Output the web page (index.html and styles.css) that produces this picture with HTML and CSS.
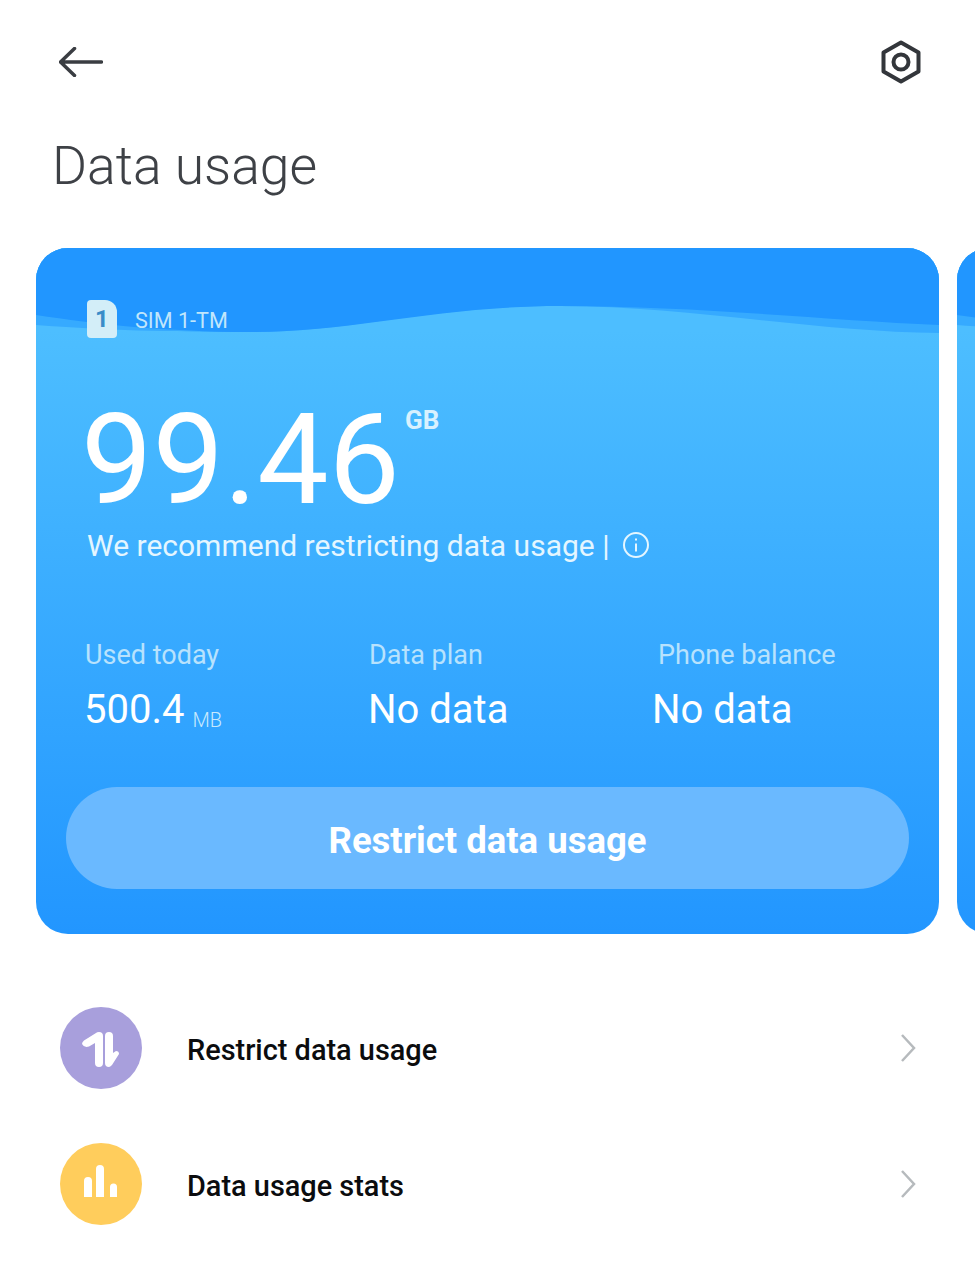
FILE: index.html
```html
<!DOCTYPE html>
<html lang="en">
<head>
    <meta charset="UTF-8">
    <meta name="viewport" content="width=device-width, initial-scale=1.0">
    <title>Data usage</title>
    <link rel="stylesheet" href="styles.css">
</head>
<body>
    <header class="top-bar">
        <svg class="back-icon" width="44" height="30" viewBox="0 0 44 30">
            <path d="M42.500 15H2M15.500 1.500 1.500 15l14 13.500"/>
        </svg>
        <svg class="settings-icon" width="40" height="44" viewBox="0 0 40 44">
            <path d="M20 2.500 37.500 12.500V31.500L20 41.500 2.500 31.500V12.500Z"/>
            <circle cx="20" cy="22" r="7.500"/>
        </svg>
    </header>

    <h1 class="page-title">Data usage</h1>

    <div class="carousel">
        <section class="card">
            <svg class="card-wave" viewBox="0 0 903 100" preserveAspectRatio="none">
                <path class="wave-band" d="M0 0H903V85C780 84 650 58 524 58 390 58 320 84 214 84 130 84 70 82 0 77Z"/>
                <path class="wave-top" d="M0 0H903V77C790 72 660 58 524 58 400 58 320 84 214 84 130 84 60 76 0 67Z"/>
            </svg>

            <div class="card-body">
                <div class="sim-row">
                    <div class="sim-icon">1</div>
                    <span class="sim-name">SIM 1-TM</span>
                </div>

                <div class="amount-row">
                    <span class="amount">99.46</span>
                    <span class="amount-unit">GB</span>
                </div>

                <div class="advice-row">
                    <span>We recommend restricting data usage |</span>
                    <svg class="info-icon" width="28" height="28" viewBox="0 0 28 28">
                        <circle cx="14" cy="14" r="12"/>
                        <path d="M14 12.500V20.500M14 7.500V9.500"/>
                    </svg>
                </div>

                <div class="stats">
                    <div class="stat">
                        <div class="stat-label">Used today</div>
                        <div class="stat-value">500.4 <small>MB</small></div>
                    </div>
                    <div class="stat">
                        <div class="stat-label">Data plan</div>
                        <div class="stat-value">No data</div>
                    </div>
                    <div class="stat">
                        <div class="stat-label stat-label-shift">Phone balance</div>
                        <div class="stat-value">No data</div>
                    </div>
                </div>

                <button class="restrict-button">Restrict data usage</button>
            </div>
        </section>
        <section class="card">
            <svg class="card-wave" viewBox="0 0 903 100" preserveAspectRatio="none">
                <path class="wave-band" d="M0 0H903V85C780 84 650 58 524 58 390 58 320 84 214 84 130 84 70 82 0 77Z"/>
                <path class="wave-top" d="M0 0H903V77C790 72 660 58 524 58 400 58 320 84 214 84 130 84 60 76 0 67Z"/>
            </svg>
        </section>
    </div>

    <ul class="menu">
        <li class="menu-item">
            <div class="menu-icon menu-icon-purple">
                <svg width="82" height="82" viewBox="0 0 82 82">
                    <path class="glyph" d="M39 25Q43 25 43 29V56Q43 60 39 60 35 60 35 56V36L29 39.500Q24 41 22 37 22 35 24 33.500L36 26Q37 25 39 25Z"/>
                    <path class="glyph" d="M49 25Q53 25 53 29V46L56 44Q59 44 59 47L52 58Q50 60 49 60 45 60 45 56V29Q45 25 49 25Z"/>
                </svg>
            </div>
            <span class="menu-label">Restrict data usage</span>
            <svg class="chevron" width="18" height="30" viewBox="0 0 18 30">
                <path d="M4 2 16 15 4 28"/>
            </svg>
        </li>
        <li class="menu-item">
            <div class="menu-icon menu-icon-yellow">
                <svg width="82" height="82" viewBox="0 0 82 82">
                    <path class="glyph" d="M24 54V38a4 4 0 0 1 8 0V54ZM36 54V26a4 4 0 0 1 8 0V54ZM50 54V44a3.500 3.500 0 0 1 7 0V54Z"/>
                </svg>
            </div>
            <span class="menu-label">Data usage stats</span>
            <svg class="chevron" width="18" height="30" viewBox="0 0 18 30">
                <path d="M4 2 16 15 4 28"/>
            </svg>
        </li>
    </ul>
</body>
</html>
```

FILE: styles.css
```css
body {
    margin: 0;
    font-family: Roboto, "Liberation Sans", sans-serif;
    background-color: #fff;
    color: #000;
    overflow-x: hidden;
}
.top-bar {
    display: flex;
    justify-content: space-between;
    align-items: center;
    padding: 40px 54px 0 59px;
}
.back-icon path {
    fill: none;
    stroke: #3a3d42;
    stroke-width: 3.5;
    stroke-linecap: round;
    stroke-linejoin: round;
}
.settings-icon path, .settings-icon circle {
    fill: none;
    stroke: #33363b;
    stroke-width: 4;
    stroke-linejoin: round;
}
.page-title {
    margin: 50px 0 0 52px;
    font-size: 53.5px;
    line-height: 64px;
    font-weight: 300;
    color: #3e4146;
}
.carousel {
    display: flex;
    gap: 18px;
    margin-top: 50px;
    padding-left: 36px;
    overflow: hidden;
}
.card {
    position: relative;
    flex: 0 0 903px;
    height: 686px;
    overflow: hidden;
    border-radius: 32px;
    background: linear-gradient(#4dbeff 12%, #2296ff 100%);
}
.card-wave {
    position: absolute;
    top: 0;
    left: 0;
    width: 100%;
    height: 100px;
}
.wave-band {
    fill: #36aaff;
}
.wave-top {
    fill: #2196ff;
}
.card-body {
    position: relative;
    padding: 52px 30px 0;
}
.sim-row {
    display: flex;
    align-items: center;
    gap: 18px;
    margin-left: 21px;
}
.sim-icon {
    width: 30px;
    height: 38px;
    box-sizing: border-box;
    padding-top: 1px;
    border-radius: 4px 12px 4px 4px;
    background-color: #d3eef8;
    color: #3a8cc8;
    font-size: 24px;
    line-height: 36px;
    font-weight: 700;
    text-align: center;
}
.sim-name {
    padding-top: 2px;
    font-size: 21.6px;
    color: #c0e6fb;
}
.amount-row {
    display: flex;
    align-items: flex-start;
    margin: 57px 0 0 15px;
}
.amount {
    font-size: 127px;
    line-height: 130px;
    font-weight: 400;
    color: #fff;
}
.amount-unit {
    margin: 10px 0 0 5px;
    font-size: 26px;
    font-weight: 700;
    color: #d8f1ff;
}
.advice-row {
    display: flex;
    align-items: center;
    gap: 13px;
    margin: 1px 0 0 21px;
    font-size: 30px;
    line-height: 40px;
    color: #e4f6ff;
}
.info-icon {
    margin-top: -3px;
}
.info-icon circle, .info-icon path {
    fill: none;
    stroke: #e4f6ff;
    stroke-width: 2;
}
.stats {
    display: grid;
    grid-template-columns: repeat(3, 284px);
    margin: 73px 0 0 18px;
}
.stat-label {
    padding-left: 1px;
    font-size: 27px;
    line-height: 32px;
    color: #b8e2fd;
}
.stat-label-shift {
    padding-left: 6px;
}
.stat-value {
    height: 48px;
    margin-top: 15px;
    font-size: 40px;
    line-height: 48px;
    color: #fff;
}
.stat-value small {
    margin-left: -2px;
    font-size: 20px;
    font-weight: 300;
    color: #c8e9fd;
    vertical-align: -4px;
}
.restrict-button {
    display: block;
    width: 100%;
    height: 102px;
    margin-top: 53px;
    padding-top: 6px;
    border: none;
    border-radius: 51px;
    background-color: #6ab9ff;
    color: #fff;
    font-family: inherit;
    font-size: 36.500px;
    font-weight: 700;
}
.menu {
    margin: 73px 0 0;
    padding: 0 59px 0 60px;
    list-style: none;
}
.menu-item {
    display: flex;
    align-items: center;
    margin-bottom: 54px;
}
.menu-icon {
    width: 82px;
    height: 82px;
    border-radius: 50%;
}
.menu-icon-purple {
    background-color: #a89fdc;
}
.menu-icon-yellow {
    background-color: #ffcd5c;
}
.glyph {
    fill: #fff;
}
.menu-label {
    flex: 1;
    margin-left: 45px;
    padding-top: 4px;
    font-size: 28.900px;
    font-weight: 500;
    color: #0b0c0e;
}
.chevron path {
    fill: none;
    stroke: #b6babd;
    stroke-width: 2.500;
}
```
